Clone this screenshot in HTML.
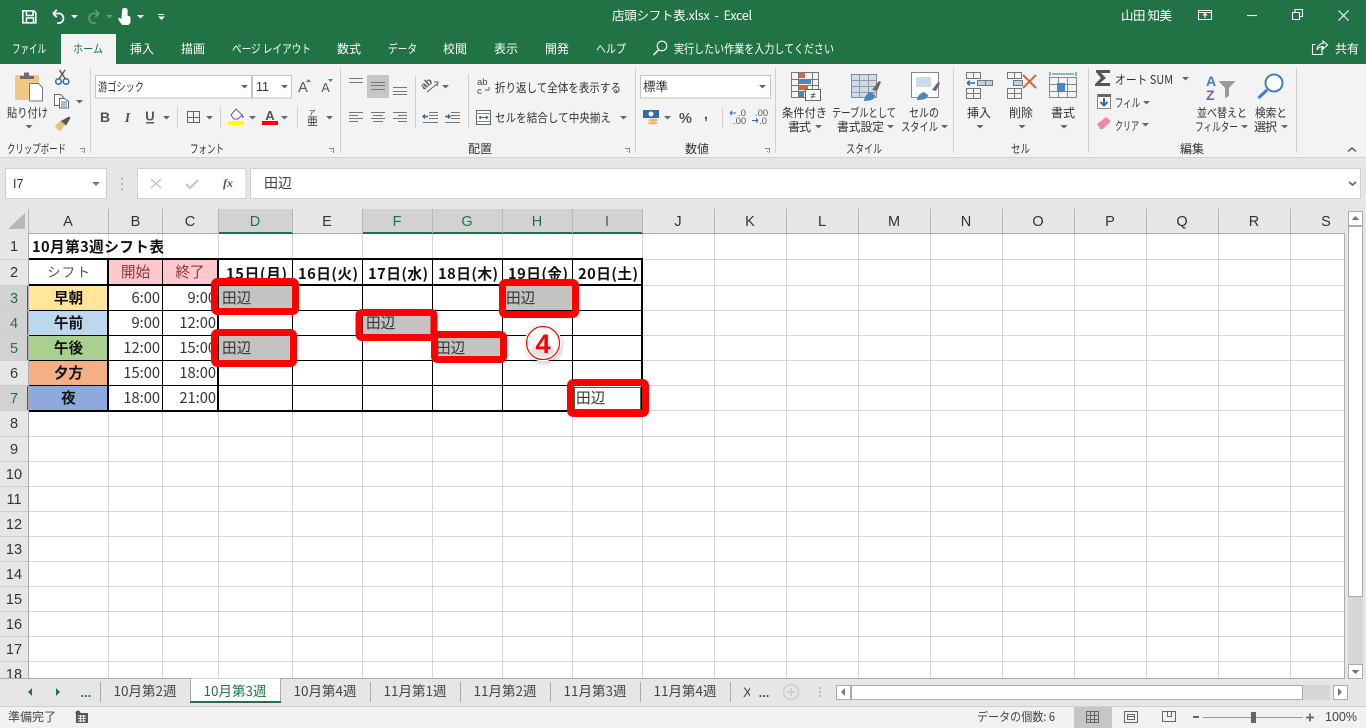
<!DOCTYPE html>
<html lang="ja"><head><meta charset="utf-8"><title>店頭シフト表.xlsx - Excel</title>
<style>
html,body{margin:0;padding:0;width:1366px;height:728px;overflow:hidden;background:#e6e6e6}
svg{display:block;position:absolute;left:0;top:0}
text{font-family:"Liberation Sans","Noto Sans CJK JP",sans-serif;font-size:12px;fill:#333;white-space:pre}
.j{font-family:"Noto Sans CJK JP","Liberation Sans",sans-serif}
.w{fill:#fff}.m{text-anchor:middle}.e{text-anchor:end}
.h{font-size:14.5px;text-anchor:middle;fill:#333}
.hs{font-size:14.5px;text-anchor:middle;fill:#217346}
.c{font-size:14.67px;fill:#333;font-family:"Noto Sans CJK JP",sans-serif}
.t{font-size:14.67px;fill:#333;text-anchor:end;font-family:"Noto Sans CJK JP",sans-serif}
.b{font-size:14.67px;font-weight:700;fill:#111;font-family:"Noto Sans CJK JP",sans-serif}
.s{font-size:13.5px;fill:#444;text-anchor:middle;font-family:"Noto Sans CJK JP",sans-serif}
.r{font-size:12px;fill:#333;font-family:"Noto Sans CJK JP",sans-serif}
</style></head><body>
<svg width="1366" height="728" viewBox="0 0 1366 728" xmlns="http://www.w3.org/2000/svg">
<defs>
<path id="a" d="M0 0h7l-3.500 3.500z" fill="#666"/>
<path id="aw" d="M0 0h7l-3.500 3.500z" fill="#fff"/>
<path id="l" d="M0 0h5v5h-1v-4h-4zM2 3h1v1h-1z" fill="#8a8a8a"/>
<filter id="bl" x="-30%" y="-30%" width="160%" height="160%"><feGaussianBlur stdDeviation="1.800"/></filter>
</defs>

<!-- backgrounds -->
<rect width="1366" height="64" fill="#217346"/>
<rect y="64" width="1366" height="93" fill="#f3f3f3"/>
<rect y="157" width="1366" height="1" fill="#d2d2d2"/>
<rect y="158" width="1366" height="570" fill="#e6e6e6"/>
<rect x="61" y="34" width="55" height="30" fill="#f3f3f3"/>

<!-- title bar icons -->
<g fill="none" stroke="#fff" stroke-width="1.600">
<path d="M22.800 10.800h11l2 2v10h-13z"/>
<path d="M26.500 11v4.500h6.500V11M26.500 23v-5h7v5"/>
<path d="M53.500 13.500h6.500a5 5 0 0 1 0 9.500h-3M53 13.500l3.800-3.600M53 13.500l3.800 3.600" stroke-width="1.800"/>
<path d="M99 13.500h-6.500a5 5 0 0 0 0 9.500h3M99 13.500l-3.800-3.600M99 13.500l-3.800 3.600" stroke="#5f9a7b" stroke-width="1.800"/>
</g>
<path d="M122 10.500a2.800 2.800 0 0 1 5.600 0v5.500h1.500l1.400 1v5.500l-2 2.500h-6.500l-4-6 1-1.200 2.500 1z" fill="#fff"/>
<use href="#aw" x="71" y="15"/><use href="#aw" x="106" y="15" opacity=".3"/><use href="#aw" x="137" y="15"/>
<rect x="158" y="14" width="6" height="1" fill="#fff"/><use href="#aw" x="158" y="16.500"/>
<text class="w j" x="612" y="20" style="font-size:12.500px" textLength="140">店頭シフト表.xlsx  -  Excel</text>
<text class="w j" x="1121" y="20" style="font-size:12.500px" textLength="51">山田 知美</text>
<g fill="none" stroke="#fff" stroke-width="1.100">
<path d="M1198.500 10.500h13v9h-13zM1198.500 12.500h13M1205 18v-4M1203 15.500l2-2 2 2"/>
<path d="M1247 15.500h10"/>
<path d="M1292.500 12.500h7v7h-7zM1295 12v-2.500h7.500v7h-2.500"/>
<path d="M1338.500 10.500l10 10M1348.500 10.500l-10 10" stroke-width="1.200"/>
<circle cx="662" cy="46" r="4.800"/><path d="M658.500 50l-5 5" stroke-width="1.500"/>
<path d="M1322 47v7.500h-9.500v-10h3M1317 50c0-4 3-6.500 6-6.500v-2.500l4.500 4-4.500 4v-2.500c-3 0-5 1-6 3.500z"/>
</g>

<!-- tabs -->
<text class="w j" x="12" y="53" textLength="34" lengthAdjust="spacingAndGlyphs">ファイル</text>
<text class="j" x="73" y="53" style="fill:#217346" textLength="30" lengthAdjust="spacingAndGlyphs">ホーム</text>
<text class="w m j" x="142" y="53">挿入</text>
<text class="w m j" x="193" y="53">描画</text>
<text class="w j" x="232" y="53" textLength="79" lengthAdjust="spacingAndGlyphs">ページ レイアウト</text>
<text class="w m j" x="349" y="53">数式</text>
<text class="w j" x="388" y="53" textLength="29" lengthAdjust="spacingAndGlyphs">データ</text>
<text class="w m j" x="455" y="53">校閲</text>
<text class="w m j" x="506" y="53">表示</text>
<text class="w m j" x="557" y="53">開発</text>
<text class="w j" x="596" y="53" textLength="30" lengthAdjust="spacingAndGlyphs">ヘルプ</text>
<text class="w j" x="674" y="53" textLength="160" lengthAdjust="spacingAndGlyphs">実行したい作業を入力してください</text>
<text class="w m j" x="1347" y="53">共有</text>

<!-- ribbon separators -->
<g fill="#d0d0d0">
<rect x="90" y="68" width="1" height="85"/><rect x="340" y="68" width="1" height="85"/><rect x="635" y="68" width="1" height="85"/><rect x="775" y="68" width="1" height="85"/><rect x="953" y="68" width="1" height="85"/><rect x="1088" y="68" width="1" height="85"/><rect x="1296" y="68" width="1" height="85"/>
<rect x="177" y="107" width="1" height="21"/><rect x="220" y="107" width="1" height="21"/><rect x="297" y="107" width="1" height="21"/><rect x="415" y="76" width="1" height="52"/><rect x="468" y="74" width="1" height="54"/><rect x="722" y="107" width="1" height="21"/>
</g>

<!-- clipboard -->
<rect x="15" y="75" width="24" height="25" rx="1" fill="#eec884"/>
<path d="M20 79v-3h4v-3.500h5v3.500h5v3z" fill="#6b6b6b"/>
<path d="M29.500 83.500h9l4 4v13.500h-13z" fill="#fff" stroke="#777"/>
<text class="r" x="7" y="117" textLength="41" lengthAdjust="spacingAndGlyphs">貼り付け</text><use href="#a" x="25.500" y="125"/>
<g fill="none" stroke="#2d6da8" stroke-width="1.500"><circle cx="58.500" cy="81.500" r="2.800"/><circle cx="66" cy="81.500" r="2.800"/></g>
<path d="M59 79l6-9M65.500 79l-6-9" stroke="#555" stroke-width="1.400" fill="none"/>
<path d="M54.500 94.500h6l3 3v8h-9z" fill="#fff" stroke="#666"/>
<path d="M59.500 98.500h5l4 3v6.500h-9z" fill="#fff" stroke="#666"/>
<path d="M61 102h6M61 104h6M61 106h6" stroke="#3f7fbf"/>
<use href="#a" x="76" y="100"/>
<path d="M55 126l6-6 4 4.500-4 6.500c-3-.5-5-2.500-6-5z" fill="#e7c182"/><path d="M61 121l8-4.500 1.500 1.500-4.500 7.500z" fill="#555"/>

<!-- font group -->
<rect x="95.500" y="75.500" width="156" height="22.500" fill="#fff" stroke="#c4c4c4"/>
<rect x="252.500" y="75.500" width="39" height="22.500" fill="#fff" stroke="#c4c4c4"/>
<text class="j" x="98" y="91" style="font-size:12px" textLength="46" lengthAdjust="spacingAndGlyphs">游ゴシック</text>
<text x="256" y="91" style="font-size:12.500px">11</text>
<use href="#a" x="241" y="85"/><use href="#a" x="281" y="85"/>
<text class="m" x="303" y="92" style="font-size:14.500px;fill:#555">A</text><path d="M306 82l2.500-3 2.500 3z" fill="#3f7fbf"/>
<text class="m" x="325.500" y="92" style="font-size:12.500px;fill:#555">A</text><path d="M328 79h5l-2.500 3z" fill="#3f7fbf"/>
<text class="m" x="105" y="122" style="font-weight:700;font-size:14px;fill:#555">B</text>
<text class="m" x="127.500" y="122" style="font-family:'Liberation Serif',serif;font-style:italic;font-weight:700;font-size:14px;fill:#555">I</text>
<text class="m" x="150" y="120.500" style="font-weight:700;font-size:13px;fill:#555">U</text><rect x="146" y="122" width="8" height="1.500" fill="#555"/>
<use href="#a" x="163" y="116"/>
<path d="M187.500 111.500h12v11h-12zM193.500 111.500v11M187.500 117.500h12" fill="none" stroke="#666"/><use href="#a" x="206" y="116"/>
<path d="M231 115l5-6 6 6-4 4h-4z" fill="#fff" stroke="#666"/><path d="M242 114l2 3-2 1z" fill="#2d6da8"/><rect x="228" y="121" width="16" height="4" fill="#ff0"/><use href="#a" x="249" y="116"/>
<text class="m" x="270" y="120" style="font-weight:700;font-size:13px;fill:#555">A</text><rect x="262" y="121" width="16" height="4" fill="#f00"/><use href="#a" x="281" y="116"/>
<text class="m j" x="312" y="115" style="font-size:7px">ア</text><text class="m j" x="312.500" y="125" style="font-size:11px">亜</text><use href="#a" x="326" y="116"/>

<!-- alignment -->
<rect x="367" y="75" width="22" height="23" fill="#c6c6c6"/>
<path d="M349 78.500h14M349 82.500h14M371 82.500h14M371 85.500h14M371 89.500h14M393 87.500h14M393 91.500h14M393 94.500h14M349 112.500h14M349 115.500h9M349 118.500h14M349 121.500h9M371 112.500h14M373 115.500h10M371 118.500h14M373 121.500h10M393 112.500h14M398 115.500h9M393 118.500h14M398 121.500h9M429 112.500h9M429 115.500h9M429 118.500h9M423 122.500h15M451 112.500h9M451 115.500h9M451 118.500h9M445 122.500h15" stroke="#777" fill="none"/>
<path d="M423 116.500h5M425 114.500l-2 2 2 2" stroke="#2d6da8" fill="none" stroke-width="1.400"/>
<path d="M445 116.500h5M448 114.500l2 2-2 2" stroke="#2d6da8" fill="none" stroke-width="1.400"/>
<text x="424" y="90" transform="rotate(-40 424 90)" style="font-size:10px;font-weight:700;fill:#555">ab</text>
<path d="M427 92l10-8M434 82l4 0-1 4" stroke="#666" fill="none" stroke-width="1.100"/>
<use href="#a" x="442" y="85"/>
<text x="477" y="85" style="font-size:9.500px;fill:#444">ab</text><text x="477" y="94" style="font-size:9.500px;fill:#444">c</text><path d="M489 87v3h-4" fill="none" stroke="#2d6da8"/>
<text class="r" x="495" y="92" textLength="126" lengthAdjust="spacingAndGlyphs">折り返して全体を表示する</text>
<rect x="476.500" y="110.500" width="14" height="14" fill="#fff" stroke="#666"/><path d="M476 113.500h15M476 121.500h15" stroke="#888"/><path d="M479 117.500h9M479 117.500l2-1.500M479 117.500l2 1.500M488 117.500l-2-1.500M488 117.500l-2 1.500" stroke="#2d6da8" fill="none"/>
<text class="r" x="495" y="122" textLength="116" lengthAdjust="spacingAndGlyphs">セルを結合して中央揃え</text><use href="#a" x="620" y="116"/>

<!-- number -->
<rect x="640.500" y="75.500" width="130" height="22.500" fill="#fff" stroke="#c4c4c4"/>
<text class="j" x="643" y="91" style="font-size:12.500px">標準</text><use href="#a" x="759" y="85"/>
<rect x="643" y="110" width="16" height="8" fill="#2d6da8"/><circle cx="651" cy="114" r="2.500" fill="#fff"/><ellipse cx="653" cy="120" rx="5" ry="1.500" fill="#e9bc6a"/><ellipse cx="653" cy="123" rx="5" ry="1.500" fill="#e9bc6a"/>
<use href="#a" x="664" y="116"/>
<text class="m" x="685.500" y="123" style="font-weight:700;font-size:14.500px;fill:#555">%</text>
<text class="m" x="706" y="119" style="font-weight:700;font-size:15px;fill:#555">,</text>
<text x="738" y="116" style="font-size:9.500px;fill:#555">.0</text><text x="733" y="124" style="font-size:9.500px;fill:#555">.00</text><path d="M730 113h6M730 113l2-2M730 113l2 2" stroke="#2d6da8" fill="none"/>
<text x="755" y="116" style="font-size:9.500px;fill:#555">.00</text><text x="759" y="124" style="font-size:9.500px;fill:#555">.0</text><path d="M752 120.500h6M758 120.500l-2-2M758 120.500l-2 2" stroke="#2d6da8" fill="none"/>

<!-- styles -->
<g fill="none" stroke="#777"><path d="M791.500 72.500h27v25h-27zM791.500 79.500h27M791.500 85.500h27M791.500 91.500h27M798.500 72.500v25M812.500 72.500v25"/></g>
<rect x="799" y="73" width="6" height="5" fill="#d9643a"/><rect x="799" y="79" width="12" height="5" fill="#4a86c0"/><rect x="799" y="85" width="9" height="5" fill="#d9643a"/><rect x="799" y="91" width="5" height="6" fill="#4a86c0"/>
<rect x="805.500" y="89.500" width="15" height="11" fill="#fff" stroke="#666"/><text class="m" x="813" y="99" style="font-size:10px">≠</text>
<text class="r" x="782" y="117" textLength="45" lengthAdjust="spacingAndGlyphs">条件付き</text><text class="r" x="788" y="131" textLength="23">書式</text><use href="#a" x="815" y="125"/>
<rect x="851.500" y="74.500" width="25" height="23" fill="#fff" stroke="#888"/><rect x="852" y="75" width="24" height="22" fill="#cbdcee"/>
<path d="M851.500 80.500h25M851.500 86.500h25M851.500 92.500h25M859.500 74.500v23M868.500 74.500v23" stroke="#999" fill="none"/>
<path d="M872 90l7-9 2 1-4 9z" fill="#666"/><path d="M864 101c0-4 3-8 7-9l4 3c0 4-3 6-11 6z" fill="#4a86c0"/>
<text class="r" x="832" y="117" textLength="64" lengthAdjust="spacingAndGlyphs">テーブルとして</text><text class="r" x="837" y="131" textLength="47" lengthAdjust="spacingAndGlyphs">書式設定</text><use href="#a" x="887" y="125"/>
<rect x="911.500" y="72.500" width="27" height="25" fill="#fff" stroke="#888"/><rect x="916" y="77" width="15" height="10" fill="#cbdcee"/>
<path d="M932 90l6-8 2 1-4 8z" fill="#666"/><path d="M917 100c0-3 3-7 7-8l4 3c0 3-3 5-11 5z" fill="#4a86c0"/>
<text class="r" x="909" y="117" textLength="30" lengthAdjust="spacingAndGlyphs">セルの</text><text class="r" x="901" y="131" textLength="37" lengthAdjust="spacingAndGlyphs">スタイル</text><use href="#a" x="941" y="125"/>

<!-- cells -->
<g fill="none" stroke="#777"><path d="M966.500 72.500h14v6h-14zM973.500 72.500v6M966.500 88.500h14v10h-14zM973.500 88.500v10M966.500 93.500h14"/></g>
<rect x="977.500" y="80.500" width="8" height="5" fill="#bcd3ea" stroke="#777"/><rect x="985.500" y="80.500" width="7" height="5" fill="#bcd3ea" stroke="#777"/><path d="M967 83h8M967 83l3-2.500M967 83l3 2.500" stroke="#2d6da8" stroke-width="1.400" fill="none"/>
<text class="r m" x="979" y="117">挿入</text><use href="#a" x="976.500" y="125"/>
<g fill="none" stroke="#777"><path d="M1007.500 72.500h14v6h-14zM1014.500 72.500v6M1007.500 88.500h14v10h-14zM1014.500 88.500v10M1007.500 93.500h14"/></g>
<rect x="1013.500" y="80.500" width="9" height="5" fill="#bcd3ea" stroke="#777"/>
<path d="M1023 75l13 13M1036 75l-13 13" stroke="#d9643a" stroke-width="2" fill="none"/>
<text class="r m" x="1021" y="117">削除</text><use href="#a" x="1018.500" y="125"/>
<path d="M1050 72v4M1076 72v4M1052 74h22" stroke="#2d6da8" fill="none"/>
<path d="M1049.500 77.500h27v20h-27zM1058.500 77.500v20M1067.500 77.500v20M1049.500 84.500h27M1049.500 91.500h27" stroke="#888" fill="none"/><rect x="1057" y="83" width="8" height="9" fill="#4a86c0"/>
<text class="r m" x="1063" y="117">書式</text><use href="#a" x="1060.500" y="125"/>

<!-- editing -->
<path d="M1096 70h14v3h-9l5 5-6 5h10v3h-15v-2l6-6-5-6z" fill="#555"/>
<text class="r" x="1115" y="84" textLength="58" lengthAdjust="spacingAndGlyphs">オート SUM</text><use href="#a" x="1182" y="77"/>
<rect x="1097.500" y="94.500" width="13" height="14" fill="#fff" stroke="#888"/><rect x="1098" y="94" width="13" height="3" fill="#666"/><path d="M1104 98v7M1100.500 102l3.500 3.500 3.500-3.500" stroke="#2d6da8" stroke-width="2" fill="none"/>
<text class="r" x="1115" y="107" textLength="25" lengthAdjust="spacingAndGlyphs">フィル</text><use href="#a" x="1143" y="101"/>
<path d="M1097 124l9-7 5 4-8 8h-3z" fill="#ea8c9c"/>
<text class="r" x="1115" y="130" textLength="24" lengthAdjust="spacingAndGlyphs">クリア</text><use href="#a" x="1142" y="123"/>
<text x="1206" y="86" style="font-weight:700;font-size:14px;fill:#3f7fbf">A</text><text x="1206" y="100" style="font-weight:700;font-size:14px;fill:#8a5aa8">Z</text>
<path d="M1218.500 81h17l-6.500 7v8l-4 2v-10z" fill="#999"/>
<text class="r" x="1197" y="117" textLength="50" lengthAdjust="spacingAndGlyphs">並べ替えと</text><text class="r" x="1195" y="131" textLength="43" lengthAdjust="spacingAndGlyphs">フィルター</text><use href="#a" x="1241" y="125"/>
<circle cx="1274" cy="83" r="8.500" fill="#fff" stroke="#3f7fbf" stroke-width="2"/><path d="M1267 90l-8.500 8" stroke="#3f7fbf" stroke-width="3" fill="none"/>
<text class="r" x="1255" y="117" textLength="32" lengthAdjust="spacingAndGlyphs">検索と</text><text class="r" x="1254" y="131" textLength="23">選択</text><use href="#a" x="1281" y="125"/>
<path d="M1348 151.500l4-3.500 4 3.500" stroke="#666" stroke-width="1.500" fill="none"/>

<!-- group labels -->
<text class="r" x="7" y="153" textLength="59" lengthAdjust="spacingAndGlyphs">クリップボード</text><text class="r" x="190" y="153" textLength="34" lengthAdjust="spacingAndGlyphs">フォント</text><text class="r m" x="480" y="153">配置</text><text class="r m" x="697" y="153">数値</text><text class="r" x="846" y="153" textLength="36" lengthAdjust="spacingAndGlyphs">スタイル</text><text class="r" x="1011" y="153" textLength="19" lengthAdjust="spacingAndGlyphs">セル</text><text class="r m" x="1192" y="153">編集</text>
<use href="#l" x="80" y="148"/><use href="#l" x="329" y="148"/><use href="#l" x="625" y="148"/><use href="#l" x="765" y="148"/>

<!-- formula bar -->
<rect x="5.500" y="168.500" width="101" height="30" fill="#fff" stroke="#cfcfcf"/>
<text x="13" y="188" style="font-size:12.500px">I7</text><path d="M92 182h8l-4 4z" fill="#777"/>
<path d="M122 178v2M122 183v2M122 188v2" stroke="#aaa" stroke-width="1.500"/>
<rect x="137.500" y="168.500" width="108.500" height="30" fill="#fff" stroke="#cfcfcf"/>
<rect x="250.500" y="168.500" width="1110" height="30" fill="#fff" stroke="#cfcfcf"/>
<path d="M151 179l10 9M161 179l-10 9" stroke="#c4c4c4" stroke-width="1.500" fill="none"/>
<path d="M186 184l4 4 8-8" stroke="#c4c4c4" stroke-width="2" fill="none"/>
<text class="m" x="228" y="187" style="font-family:'Liberation Serif',serif;font-style:italic;font-weight:700;font-size:12px;fill:#555">fx</text>
<text class="j" x="264" y="188" style="font-size:14px;fill:#444">田辺</text>
<path d="M1349 182l3.500 3 3.500-3" stroke="#666" stroke-width="1.800" fill="none"/>

<!-- headers -->
<path d="M25 213v16h-17z" fill="#b8b8b8"/>
<rect x="219" y="209" width="74" height="25" fill="#d2d2d2"/><rect x="363" y="209" width="280" height="25" fill="#d2d2d2"/>
<rect x="219" y="232" width="74" height="2" fill="#217346"/><rect x="363" y="232" width="280" height="2" fill="#217346"/>
<rect x="28" y="233" width="191" height="1" fill="#ababab"/><rect x="293" y="233" width="70" height="1" fill="#ababab"/><rect x="643" y="233" width="701" height="1" fill="#ababab"/>
<rect x="0" y="286" width="28" height="75" fill="#d2d2d2"/><rect x="0" y="386" width="28" height="25" fill="#d2d2d2"/>
<rect x="27" y="286" width="2" height="75" fill="#217346"/><rect x="27" y="386" width="2" height="25" fill="#217346"/>
<g fill="#b8b8b8">
<rect x="28" y="209" width="1" height="24"/><rect x="108" y="209" width="1" height="24"/><rect x="162" y="209" width="1" height="24"/><rect x="218" y="209" width="1" height="24"/><rect x="292" y="209" width="1" height="24"/><rect x="362" y="209" width="1" height="24"/><rect x="432" y="209" width="1" height="24"/><rect x="502" y="209" width="1" height="24"/><rect x="572" y="209" width="1" height="24"/><rect x="642" y="209" width="1" height="24"/><rect x="714" y="209" width="1" height="24"/><rect x="786" y="209" width="1" height="24"/><rect x="858" y="209" width="1" height="24"/><rect x="930" y="209" width="1" height="24"/><rect x="1002" y="209" width="1" height="24"/><rect x="1074" y="209" width="1" height="24"/><rect x="1146" y="209" width="1" height="24"/><rect x="1218" y="209" width="1" height="24"/><rect x="1290" y="209" width="1" height="24"/>
</g>
<text class="h" x="68" y="226">A</text><text class="h" x="135.500" y="226">B</text><text class="h" x="190" y="226">C</text><text class="hs" x="255" y="226">D</text><text class="h" x="327" y="226">E</text><text class="hs" x="397" y="226">F</text><text class="hs" x="467" y="226">G</text><text class="hs" x="537" y="226">H</text><text class="hs" x="607" y="226">I</text><text class="h" x="678" y="226">J</text><text class="h" x="750" y="226">K</text><text class="h" x="822" y="226">L</text><text class="h" x="894" y="226">M</text><text class="h" x="966" y="226">N</text><text class="h" x="1038" y="226">O</text><text class="h" x="1110" y="226">P</text><text class="h" x="1182" y="226">Q</text><text class="h" x="1254" y="226">R</text><text class="h" x="1326" y="226">S</text>
<text class="h" x="14" y="251">1</text><text class="h" x="14" y="277">2</text><text class="hs" x="14" y="303">3</text><text class="hs" x="14" y="328">4</text><text class="hs" x="14" y="353">5</text><text class="h" x="14" y="378">6</text><text class="hs" x="14" y="403">7</text><text class="h" x="14" y="428">8</text><text class="h" x="14" y="454">9</text><text class="h" x="14" y="479">10</text><text class="h" x="14" y="504">11</text><text class="h" x="14" y="529">12</text><text class="h" x="14" y="554">13</text><text class="h" x="14" y="579">14</text><text class="h" x="14" y="604">15</text><text class="h" x="14" y="629">16</text><text class="h" x="14" y="654">17</text><text class="h" x="14" y="679">18</text>

<!-- sheet -->
<rect x="29" y="234" width="1315" height="444" fill="#fff"/>
<g fill="#d6d6d6">
<rect x="108" y="234" width="1" height="444"/><rect x="162" y="234" width="1" height="444"/><rect x="218" y="234" width="1" height="444"/><rect x="292" y="234" width="1" height="444"/><rect x="362" y="234" width="1" height="444"/><rect x="432" y="234" width="1" height="444"/><rect x="502" y="234" width="1" height="444"/><rect x="572" y="234" width="1" height="444"/><rect x="642" y="234" width="1" height="444"/><rect x="714" y="234" width="1" height="444"/><rect x="786" y="234" width="1" height="444"/><rect x="858" y="234" width="1" height="444"/><rect x="930" y="234" width="1" height="444"/><rect x="1002" y="234" width="1" height="444"/><rect x="1074" y="234" width="1" height="444"/><rect x="1146" y="234" width="1" height="444"/><rect x="1218" y="234" width="1" height="444"/><rect x="1290" y="234" width="1" height="444"/>
<rect x="29" y="259" width="1315" height="1"/><rect x="29" y="285" width="1315" height="1"/><rect x="29" y="310" width="1315" height="1"/><rect x="29" y="335" width="1315" height="1"/><rect x="29" y="360" width="1315" height="1"/><rect x="29" y="385" width="1315" height="1"/><rect x="29" y="410" width="1315" height="1"/><rect x="29" y="436" width="1315" height="1"/><rect x="29" y="461" width="1315" height="1"/><rect x="29" y="486" width="1315" height="1"/><rect x="29" y="511" width="1315" height="1"/><rect x="29" y="536" width="1315" height="1"/><rect x="29" y="561" width="1315" height="1"/><rect x="29" y="586" width="1315" height="1"/><rect x="29" y="611" width="1315" height="1"/><rect x="29" y="636" width="1315" height="1"/><rect x="29" y="661" width="1315" height="1"/>
</g>
<rect x="28" y="234" width="1" height="444" fill="#ababab"/>
<rect x="1344" y="233" width="1" height="446" fill="#ababab"/>
<rect x="0" y="678" width="1345" height="1" fill="#ababab"/>
<g fill="#ccc"><rect x="0" y="259" width="28" height="1"/><rect x="0" y="285" width="28" height="1"/><rect x="0" y="310" width="28" height="1"/><rect x="0" y="335" width="28" height="1"/><rect x="0" y="360" width="28" height="1"/><rect x="0" y="385" width="28" height="1"/><rect x="0" y="410" width="28" height="1"/><rect x="0" y="436" width="28" height="1"/><rect x="0" y="461" width="28" height="1"/><rect x="0" y="486" width="28" height="1"/><rect x="0" y="511" width="28" height="1"/><rect x="0" y="536" width="28" height="1"/><rect x="0" y="561" width="28" height="1"/><rect x="0" y="586" width="28" height="1"/><rect x="0" y="611" width="28" height="1"/><rect x="0" y="636" width="28" height="1"/><rect x="0" y="661" width="28" height="1"/></g>

<!-- cell fills -->
<rect x="29" y="286" width="79" height="24" fill="#ffe699"/><rect x="29" y="311" width="79" height="24" fill="#bdd7ee"/><rect x="29" y="336" width="79" height="24" fill="#a9d08e"/><rect x="29" y="361" width="79" height="24" fill="#f4b084"/><rect x="29" y="386" width="79" height="24" fill="#8ea9db"/>
<rect x="109" y="260" width="109" height="25" fill="#ffc7ce"/>
<rect x="219" y="286" width="73" height="24" fill="#c3c3c3"/><rect x="219" y="336" width="73" height="24" fill="#c3c3c3"/><rect x="363" y="311" width="69" height="24" fill="#c3c3c3"/><rect x="433" y="336" width="69" height="24" fill="#c3c3c3"/><rect x="503" y="286" width="69" height="24" fill="#c3c3c3"/>

<!-- table borders -->
<g fill="#000">
<rect x="29" y="258" width="614" height="2"/><rect x="29" y="284" width="614" height="2"/><rect x="29" y="410" width="614" height="2"/>
<rect x="29" y="310" width="614" height="1"/><rect x="29" y="335" width="614" height="1"/><rect x="29" y="360" width="614" height="1"/><rect x="29" y="385" width="614" height="1"/>
<rect x="107" y="258" width="2" height="154"/><rect x="217" y="258" width="2" height="154"/><rect x="641" y="258" width="2" height="154"/>
<rect x="162" y="258" width="1" height="154"/><rect x="292" y="258" width="1" height="154"/><rect x="362" y="258" width="1" height="154"/><rect x="432" y="258" width="1" height="154"/><rect x="502" y="258" width="1" height="154"/><rect x="572" y="258" width="1" height="154"/>
</g>

<!-- cell text -->
<text class="b" x="32" y="252" textLength="132">10月第3週シフト表</text>
<text class="c" x="47" y="277" style="fill:#555;font-size:13.500px" textLength="43">シフト</text>
<text class="m c" x="135.500" y="277" style="fill:#8b3a3a">開始</text><text class="m c" x="190" y="277" style="fill:#8b3a3a">終了</text>
<text class="b" x="226" y="279" textLength="61">15日(月)</text><text class="b" x="298" y="279" textLength="60">16日(火)</text><text class="b" x="368" y="279" textLength="60">17日(水)</text><text class="b" x="438" y="279" textLength="60">18日(木)</text><text class="b" x="508" y="279" textLength="60">19日(金)</text><text class="b" x="578" y="279" textLength="60">20日(土)</text>
<text class="b m" x="68.500" y="303">早朝</text><text class="b m" x="68.500" y="328">午前</text><text class="b m" x="68.500" y="353">午後</text><text class="b m" x="68.500" y="378">夕方</text><text class="b m" x="68.500" y="403">夜</text>
<text class="t" x="160" y="303">6:00</text><text class="t" x="160" y="328">9:00</text><text class="t" x="160" y="353">12:00</text><text class="t" x="160" y="378">15:00</text><text class="t" x="160" y="403">18:00</text>
<text class="t" x="216" y="303">9:00</text><text class="t" x="216" y="328">12:00</text><text class="t" x="216" y="353">15:00</text><text class="t" x="216" y="378">18:00</text><text class="t" x="216" y="403">21:00</text>
<text class="c" x="222" y="303">田辺</text><text class="c" x="222" y="353">田辺</text><text class="c" x="366" y="328">田辺</text><text class="c" x="436" y="353">田辺</text><text class="c" x="506" y="303">田辺</text><text class="c" x="576" y="403">田辺</text>
<rect x="574.500" y="387.500" width="66" height="22" fill="none" stroke="#217346"/>

<!-- red boxes -->
<g fill="none" stroke="#f00" stroke-width="7">
<rect x="214.500" y="281.500" width="81" height="30" rx="3"/>
<rect x="214.500" y="332.500" width="79" height="31" rx="3"/>
<rect x="359" y="312.500" width="75" height="25" rx="3"/>
<rect x="434.500" y="334.500" width="69" height="25" rx="3"/>
<rect x="502.500" y="282.500" width="73" height="32" rx="3"/>
<rect x="570.500" y="382.500" width="75" height="31" rx="3"/>
</g>

<!-- ④ -->
<circle cx="544" cy="345" r="19" fill="#000" opacity=".18" filter="url(#bl)"/>
<circle cx="543" cy="343" r="18.500" fill="#fff"/>
<path d="M531 352a16 16 0 0 0 24 0c-3-7-7-10-12-10s-9 3-12 10z" fill="#e4e4e4"/>
<circle cx="543" cy="343" r="16.500" fill="none" stroke="#f00" stroke-width="1.200"/>
<text class="m" x="543" y="353" style="font-size:27px;font-weight:700;fill:#f00">4</text>

<!-- scrollbars -->
<rect x="1345" y="209" width="21" height="470" fill="#e6e6e6"/>
<rect x="1348" y="226" width="15" height="438" fill="#d6d6d6"/>
<rect x="1348.500" y="211.500" width="14" height="14" fill="#fff" stroke="#ababab"/><path d="M1351.500 220h8l-4-4z" fill="#777"/>
<rect x="1348.500" y="226.500" width="14" height="370" fill="#fff" stroke="#ababab"/>
<rect x="1348.500" y="664.500" width="14" height="14" fill="#fff" stroke="#ababab"/><path d="M1351.500 670h8l-4 4z" fill="#777"/>

<!-- sheet tabs -->
<rect x="0" y="679" width="1366" height="28" fill="#e6e6e6"/>
<path d="M190.500 678.500v24h90v-24" fill="#fff" stroke="#ababab"/>
<rect x="190" y="701" width="91" height="2" fill="#217346"/>
<path d="M32 688v8l-4-4zM56 688v8l4-4z" fill="#217346"/>
<text class="m" x="86" y="697" style="font-weight:700;font-size:13px;fill:#217346">...</text>
<g fill="#aaa"><rect x="100" y="682" width="1" height="20"/><rect x="370" y="682" width="1" height="20"/><rect x="460" y="682" width="1" height="20"/><rect x="550" y="682" width="1" height="20"/><rect x="640" y="682" width="1" height="20"/><rect x="730" y="682" width="1" height="20"/></g>
<text class="s" x="145" y="696">10月第2週</text><text class="s" x="235" y="696" style="fill:#217346">10月第3週</text><text class="s" x="325" y="696">10月第4週</text><text class="s" x="415" y="696">11月第1週</text><text class="s" x="505" y="696">11月第2週</text><text class="s" x="595" y="696">11月第3週</text><text class="s" x="685" y="696">11月第4週</text>
<text x="743" y="697" style="font-size:13.500px;fill:#444">X</text><rect x="750" y="684" width="8" height="16" fill="#e6e6e6"/>
<text class="m" x="764" y="697" style="font-weight:700;font-size:13px;fill:#217346">...</text>
<circle cx="791" cy="692" r="7.500" fill="none" stroke="#cfcfcf" stroke-width="1.500"/><path d="M787 692h8M791 688v8" stroke="#cfcfcf" stroke-width="2"/>
<path d="M820 687v2M820 691v2M820 695v2" stroke="#aaa" stroke-width="1.500"/>
<rect x="836.500" y="685.500" width="14" height="14" fill="#fff" stroke="#ababab"/><path d="M845 688v8l-4-4z" fill="#777"/>
<rect x="851" y="685" width="479" height="15" fill="#d6d6d6"/>
<rect x="851.500" y="685.500" width="451" height="14" fill="#fff" stroke="#ababab"/>
<rect x="1333.500" y="685.500" width="14" height="14" fill="#fff" stroke="#ababab"/><path d="M1338 688v8l4-4z" fill="#777"/>

<!-- status bar -->
<rect x="0" y="706" width="1366" height="1" fill="#cfcfcf"/>
<rect x="0" y="707" width="1366" height="21" fill="#f1f1f1"/>
<text class="j" x="8" y="721" style="font-size:12px;fill:#444">準備完了</text>
<circle cx="78" cy="713" r="2.500" fill="#555"/><path d="M76 713h12v10h-12z" fill="#555"/><path d="M78 716h8M78 718.500h8M78 721h8M80.500 715v7M83.500 715v7" stroke="#f1f1f1" fill="none"/>
<text class="j" x="977" y="721" style="font-size:12px;fill:#444" textLength="78" lengthAdjust="spacingAndGlyphs">データの個数: 6</text>
<rect x="1074" y="707" width="38" height="21" fill="#c6c6c6"/>
<path d="M1086.500 711.500h12v11h-12zM1090.500 711.500v11M1094.500 711.500v11M1086.500 715.500h12M1086.500 719.500h12" fill="none" stroke="#666"/>
<path d="M1124.500 711.500h13v11h-13zM1127.500 714.500h7v5h-7zM1128 716.500h6" fill="none" stroke="#666"/>
<path d="M1162.500 711.500h13v10h-13zM1167.500 711.500v5h4v-5" fill="none" stroke="#666"/>
<rect x="1193" y="716" width="6" height="2" fill="#666"/>
<rect x="1203" y="717" width="100" height="1" fill="#999"/>
<rect x="1251" y="712" width="5" height="11" fill="#666"/>
<path d="M1306 717.500h8M1310 713.500v8" stroke="#666" stroke-width="1.800"/>
<text x="1325" y="721" style="font-size:12.500px;fill:#444">100%</text>
</svg>
</body></html>
